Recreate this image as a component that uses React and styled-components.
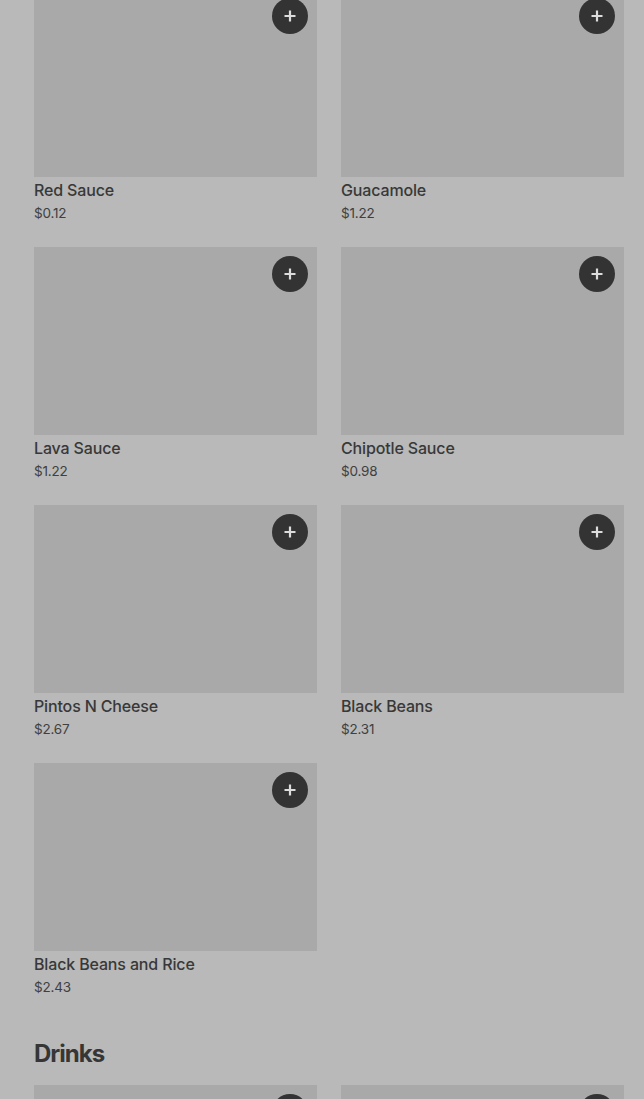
import React from 'react'
import styled, { createGlobalStyle } from 'styled-components'

const GlobalStyle = createGlobalStyle`
  html, body {
    margin: 0;
    padding: 0;
    background: #b9b9b9;
    font-family: Inter, "Liberation Sans", sans-serif;
    overflow: hidden;
  }
`

const Page = styled.div`
  width: 644px;
  height: 1099px;
  overflow: hidden;
  background: #b9b9b9;
`

const Content = styled.div`
  margin-top: -11px;
  padding: 0 20px 0 34px;
`

const Grid = styled.div`
  display: grid;
  grid-template-columns: 283px 283px;
  column-gap: 24px;
  row-gap: 26px;
`

const Card = styled.div`
  display: flex;
  flex-direction: column;
`

const Thumb = styled.div`
  position: relative;
  height: 188px;
  background: #a9a9a9;
`

const AddButton = styled.button`
  position: absolute;
  top: 9px;
  right: 9px;
  width: 36px;
  height: 36px;
  border-radius: 50%;
  border: none;
  padding: 0;
  background: #333333;
  display: flex;
  align-items: center;
  justify-content: center;
  cursor: pointer;
`

const Name = styled.div`
  margin-top: 3px;
  font-size: 16px;
  font-weight: 500;
  letter-spacing: -0.15px;
  line-height: 20px;
  color: #383838;
`

const Price = styled.div`
  margin-top: 5px;
  font-size: 13.5px;
  letter-spacing: -0.2px;
  line-height: 16px;
  color: #404040;
`

const Section = styled.h2`
  margin: 44px 0 16px;
  font-size: 24px;
  font-weight: 700;
  letter-spacing: -1px;
  line-height: 30px;
  color: #363636;
`

const Plus = () => (
  <svg width="14" height="14" viewBox="0 0 14 14">
    <path d="M7 1.5v11M1.5 7h11" stroke="#dcdcdc" strokeWidth="2.2" />
  </svg>
)

const sides = [
  { name: 'Red Sauce', price: '$0.12' },
  { name: 'Guacamole', price: '$1.22' },
  { name: 'Lava Sauce', price: '$1.22' },
  { name: 'Chipotle Sauce', price: '$0.98' },
  { name: 'Pintos N Cheese', price: '$2.67' },
  { name: 'Black Beans', price: '$2.31' },
  { name: 'Black Beans and Rice', price: '$2.43' },
]

const drinks = [
  { name: 'Fountain Drink', price: '$1.99' },
  { name: 'Bottled Water', price: '$1.49' },
]

const Item = ({ item }) => (
  <Card>
    <Thumb>
      <AddButton aria-label="Add">
        <Plus />
      </AddButton>
    </Thumb>
    <Name>{item.name}</Name>
    <Price>{item.price}</Price>
  </Card>
)

export default function App() {
  return (
    <Page>
      <GlobalStyle />
      <Content>
        <Grid>
          {sides.map((s) => (
            <Item key={s.name} item={s} />
          ))}
        </Grid>
        <Section>Drinks</Section>
        <Grid>
          {drinks.map((d) => (
            <Item key={d.name} item={d} />
          ))}
        </Grid>
      </Content>
    </Page>
  )
}
